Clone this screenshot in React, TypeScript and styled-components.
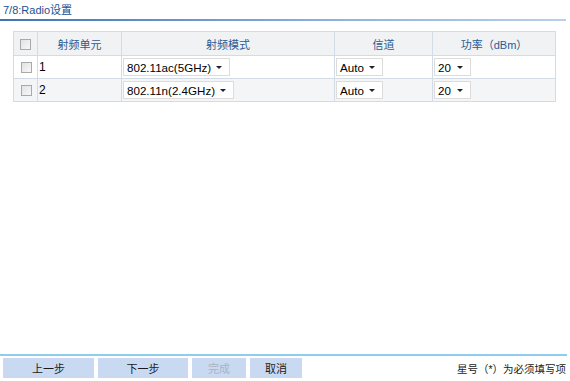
import React from "react";
import styled, { createGlobalStyle } from "styled-components";

const Global = createGlobalStyle`
  html, body { margin: 0; padding: 0; background: #fff; }
  body { font-family: "Liberation Sans", Arial, "Noto Sans CJK SC", sans-serif; font-size: 12px; color: #000; }
`;

const Page = styled.div`
  width: 570px;
  height: 381px;
  display: flex;
  flex-direction: column;
  box-sizing: border-box;
`;

const TitleBar = styled.div`
  height: 21px;
  padding: 4px 0 0 3px;
  box-sizing: border-box;
  color: #1d4f8f;
  font-size: 11px;
  line-height: 12px;
  margin-right: 4px;
  border-bottom: 2px solid transparent;
  border-image: linear-gradient(to right, #3e73b3, #8fb3dc 60%, #b9d0ea) 1;
`;

const TableWrap = styled.div`
  margin: 10px 14px 0 13px;
`;

const Table = styled.table`
  width: 100%;
  border-collapse: collapse;
  table-layout: fixed;
  border: 1px solid #c3d0df;
`;

const Th = styled.th<{ w?: number }>`
  ${(p) => (p.w ? `width: ${p.w}px;` : "")}
  height: 23px;
  background: #f0f2f4;
  color: #2b5a93;
  font-weight: normal;
  font-size: 11px;
  border: 1px solid #d3dce6;
  padding: 0;
  text-align: center;
`;

const Tr = styled.tr<{ alt?: boolean }>`
  background: ${(p) => (p.alt ? "#f4f5f6" : "#fff")};
`;

const Td = styled.td<{ center?: boolean }>`
  height: 22px;
  border: 1px solid #d3dce6;
  padding: 0 0 0 1px;
  text-align: ${(p) => (p.center ? "center" : "left")};
  vertical-align: middle;
`;

const Check = styled.span`
  display: inline-block;
  width: 9px;
  height: 9px;
  border: 1px solid #a9a9a9;
  background: linear-gradient(135deg, #e2e2e2, #f8f8f8);
  vertical-align: middle;
`;

const Select = styled.span<{ w: number }>`
  display: inline-flex;
  align-items: center;
  justify-content: space-between;
  width: ${(p) => p.w}px;
  height: 18px;
  box-sizing: border-box;
  border: 1px solid #dcdcdc;
  background: #fff;
  padding: 0 7px 0 3px;
  font-size: 11.6px;
  color: #000;
  vertical-align: middle;
`;

const Arrow = styled.span`
  width: 0;
  height: 0;
  border-left: 3px solid transparent;
  border-right: 3px solid transparent;
  border-top: 3px solid #222;
`;

const Footer = styled.div`
  margin-top: auto;
  margin-bottom: 3px;
  margin-right: 3px;
  border-top: 2px solid #8fcdf0;
  padding-top: 2px;
  display: flex;
  align-items: center;
  gap: 4px;
  padding-left: 3px;
`;

const Btn = styled.span<{ w: number; disabled?: boolean }>`
  width: ${(p) => p.w}px;
  height: 20px;
  background: #c8d9f1;
  color: ${(p) => (p.disabled ? "#a8b3c2" : "#1a1a1a")};
  display: flex;
  align-items: center;
  justify-content: center;
  font-size: 11px;
`;

const Note = styled.span`
  margin-left: auto;
  color: #222;
  font-size: 10.5px;
  padding-right: 1px;
`;

const rows = [
  { id: "1", mode: "802.11ac(5GHz)", mw: 107 },
  { id: "2", mode: "802.11n(2.4GHz)", mw: 111 },
];

export default function App() {
  return (
    <Page>
      <Global />
      <TitleBar>7/8:Radio设置</TitleBar>
      <TableWrap>
        <Table>
          <thead>
            <tr>
              <Th w={23}><Check /></Th>
              <Th w={83}>射频单元</Th>
              <Th w={212}>射频模式</Th>
              <Th w={97}>信道</Th>
              <Th>功率（dBm）</Th>
            </tr>
          </thead>
          <tbody>
            {rows.map((r, i) => (
              <Tr key={r.id} alt={i % 2 === 1}>
                <Td center><Check /></Td>
                <Td>{r.id}</Td>
                <Td><Select w={r.mw}>{r.mode}<Arrow /></Select></Td>
                <Td><Select w={47}>Auto<Arrow /></Select></Td>
                <Td><Select w={37}>20<Arrow /></Select></Td>
              </Tr>
            ))}
          </tbody>
        </Table>
      </TableWrap>
      <Footer>
        <Btn w={91}>上一步</Btn>
        <Btn w={90}>下一步</Btn>
        <Btn w={54} disabled>完成</Btn>
        <Btn w={52}>取消</Btn>
        <Note>星号（*）为必须填写项</Note>
      </Footer>
    </Page>
  );
}
